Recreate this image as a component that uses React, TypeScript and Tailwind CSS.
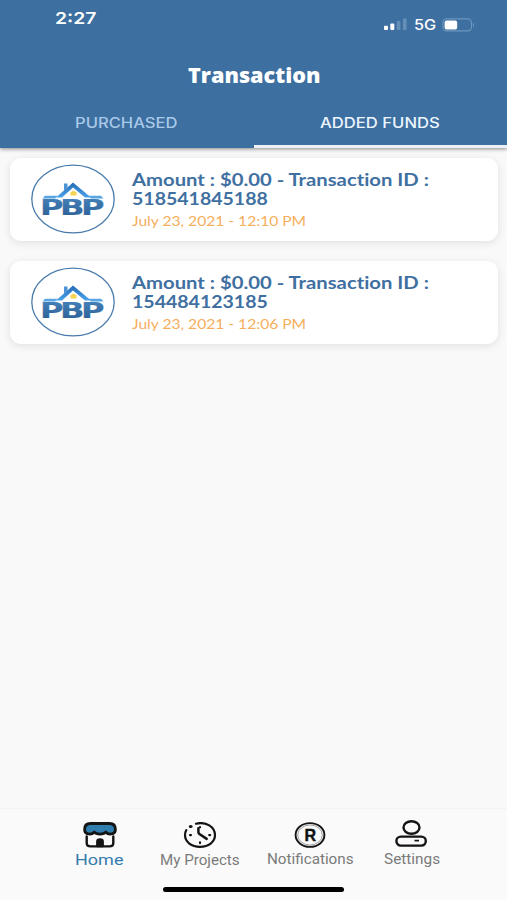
import { useLayoutEffect, useRef, useState, type ReactNode } from "react";
import { clsx } from "clsx";

/** One line of text, stretched horizontally to fill the given width. */
function Stretch({ width, className, children }: { width: number; className?: string; children: ReactNode }) {
  const ref = useRef<HTMLSpanElement>(null);
  const [scale, setScale] = useState(1);
  useLayoutEffect(() => {
    if (ref.current) setScale(width / ref.current.offsetWidth);
  }, [width]);
  return (
    <span className={clsx("block whitespace-nowrap", className)} style={{ width }}>
      <span ref={ref} className="inline-block origin-left" style={{ transform: `scaleX(${scale})` }}>
        {children}
      </span>
    </span>
  );
}

function StatusBar() {
  return (
    <div className="flex h-[52px] items-start justify-between pr-[32px] pl-[55px] [font-family:Inter,sans-serif] text-white">
      <Stretch width={41} className="mt-[9px] text-[16.5px] leading-[19px] font-semibold">2:27</Stretch>
      <div className="mt-[15px] flex h-[19px] items-center">
        <svg className="mr-[7px] h-[13px] w-[23px]" viewBox="0 0 23 13">
          <rect x="0" y="7.8" width="4" height="4.2" rx="1" fill="#fff" />
          <rect x="6.3" y="5.4" width="4" height="6.6" rx="1" fill="#fff" />
          <rect x="12.8" y="3" width="3.6" height="9" rx="1" fill="#6490b8" />
          <rect x="19" y="0.6" width="3.6" height="11.4" rx="1" fill="#6490b8" />
        </svg>
        <Stretch width={22} className="mr-[6px] text-[14px] leading-[19px] font-medium">5G</Stretch>
        <svg className="h-[14px] w-[33px]" viewBox="0 0 33 14">
          <rect x="0.9" y="0.9" width="28.6" height="12" rx="3.8" fill="none" stroke="#6c97be" strokeWidth="1.1" />
          <rect x="2.6" y="2.4" width="12.6" height="9" rx="2" fill="#fff" />
          <path d="M31 4.8c1.6.7 1.6 3.5 0 4.2z" fill="#6c97be" />
        </svg>
      </div>
    </div>
  );
}

function Header() {
  return (
    <header className="relative z-10 flex h-[148px] shrink-0 flex-col bg-[#3d6fa0] shadow-[0_1px_4px_rgba(0,0,0,0.45)]">
      <StatusBar />
      <h1 className="flex h-[46px] justify-center pl-[1px]">
        <Stretch width={133} className="text-[20.5px] leading-[46px] font-extrabold text-white [font-family:'Open_Sans',sans-serif]">
          Transaction
        </Stretch>
      </h1>
      <div className="grid h-[50px] grid-cols-2 grid-rows-[50px] [font-family:Inter,sans-serif] text-[14px] leading-[50px] font-medium">
        <div className="flex justify-center text-[#a9c9e8]">
          <Stretch width={103}>PURCHASED</Stretch>
        </div>
        <div className="flex h-[50px] justify-center border-b-3 border-[#eef1f6] text-[#edf6ff]">
          <Stretch width={120}>ADDED FUNDS</Stretch>
        </div>
      </div>
    </header>
  );
}

function Logo() {
  return (
    <svg className="-mt-[2px] h-[70px] w-[84px] shrink-0" viewBox="0 0 84 70">
      <defs>
        <linearGradient id="roof" x1="0" y1="0" x2="0" y2="1">
          <stop offset="0" stopColor="#2569b3" />
          <stop offset="1" stopColor="#4ba3ed" />
        </linearGradient>
        <linearGradient id="letters" x1="0" y1="0" x2="0" y2="1">
          <stop offset="0" stopColor="#4785bd" />
          <stop offset="1" stopColor="#285a91" />
        </linearGradient>
      </defs>
      <ellipse cx="42" cy="35" rx="41.2" ry="33.8" fill="#fff" stroke="#4a7bad" strokeWidth="1.3" />
      <path d="M33 19.500h3.500v4l-3.500 3z" fill="#4b94d8" />
      <path d="M42 18.500 60 33.500H54L42 23.500 31 33.500H25z" fill="url(#roof)" />
      <path d="M14 31.700H27L24 34.500H11.500zM57 31.700H70L72.500 34.500H60z" fill="#5aa6e4" />
      <path d="M39.500 31.500v-3l3-2 3 2v3z" fill="#f4d34f" />
      <g fontFamily="DejaVu Sans, sans-serif" fontSize="21.500" fontWeight="700" fill="url(#letters)" stroke="#346da6" strokeWidth="0.200">
        <text x="9" y="51.300" textLength="23.500" lengthAdjust="spacingAndGlyphs">P</text>
        <text x="29" y="51.300" textLength="24.500" lengthAdjust="spacingAndGlyphs">B</text>
        <text x="50" y="51.300" textLength="23.500" lengthAdjust="spacingAndGlyphs">P</text>
      </g>
    </svg>
  );
}

function TransactionCard({ id, idWidth, date }: { id: string; idWidth: number; date: string }) {
  return (
    <article className="flex h-[83px] items-center rounded-[11px] bg-white pl-[21px] shadow-[0_2px_8px_rgba(0,0,0,0.1)]">
      <Logo />
      <div className="ml-[17px] pt-[1px] [font-family:Lato,sans-serif] [font-variant-ligatures:none]">
        <div className="text-[16.5px] leading-[19.5px] font-bold text-[#3f70a1]">
          <Stretch width={297}>Amount : $0.00 - Transaction ID :</Stretch>
          <Stretch width={idWidth}>{id}</Stretch>
        </div>
        <Stretch width={174} className="mt-[1px] text-[14px] leading-[19px] text-[#f5ae5c]">{date}</Stretch>
      </div>
    </article>
  );
}

function HomeIcon() {
  return (
    <svg className="ml-[2px] h-[26px] w-[34px]" viewBox="0 0 34 26" fill="none" stroke="#141414" strokeWidth="2.400" strokeLinecap="round" strokeLinejoin="round">
      <path d="M3.700 14.500v6.500q0 3.400 4 3.400h18.600q4 0 4-3.400v-6.500" />
      <path d="M7.500 1.500h19c4.500 0 5.900 3 5.900 6 0 5.300-7.400 5.800-9.600 2.500-2 2.700-9.600 2.700-11.600 0C9 13.300 1.600 12.800 1.600 7.500c0-3 1.400-6 5.900-6z" fill="#307eae" strokeWidth="2.800" />
      <path d="M14.300 24v-4.500q0-2 2.700-2t2.700 2v4.500z" fill="#141414" />
    </svg>
  );
}

function ProjectsIcon() {
  return (
    <svg className="h-[26px] w-[34px]" viewBox="0 0 34 26" fill="none" stroke="#141414" strokeWidth="2.200" strokeLinecap="round" strokeLinejoin="round">
      <path d="M13 1.700C23 -.8 32 5 32 13.100 32 20 25.500 24.800 17 24.800S2 20 2 13.100c0-1.700.5-3.500 1.300-5" />
      <ellipse cx="7.700" cy="4.500" rx="1.900" ry="1.500" fill="#141414" stroke="none" />
      <path d="M15.400 6.300v4q0 1 1 1.700l7.300 4.900" strokeWidth="2.500" />
      <path d="M7 13.100h1M26.200 13.100h1M17 20.300v.8M17 5.100v.2" />
    </svg>
  );
}

function NotificationsIcon() {
  return (
    <svg className="h-[26px] w-[34px]" viewBox="0 0 34 26">
      <ellipse cx="17" cy="13" rx="14.400" ry="11.900" fill="none" stroke="#141414" strokeWidth="1.900" />
      <ellipse cx="17" cy="13" rx="12.300" ry="10" fill="none" stroke="#777" strokeWidth="0.700" />
      <text x="11.400" y="18.700" textLength="11.600" lengthAdjust="spacingAndGlyphs" fontFamily="Liberation Sans, sans-serif" fontSize="16.500" fontWeight="700" fill="#111" stroke="#111" strokeWidth="0.400">R</text>
    </svg>
  );
}

function SettingsIcon() {
  return (
    <svg className="mr-[1px] h-[27px] w-[34px]" viewBox="0 0 34 27" fill="none" stroke="#141414" strokeWidth="2.400">
      <ellipse cx="17.500" cy="7.500" rx="8" ry="6.300" />
      <rect x="2.400" y="16.600" width="29.400" height="9" rx="4.500" />
      <path d="M20.500 20.600h4.500" strokeWidth="1.700" />
    </svg>
  );
}

function NavItem({ icon, label, width, className }: { icon: ReactNode; label: string; width: number; className?: string }) {
  return (
    <div className="flex flex-col items-center">
      <div className="flex h-[28px] items-end">{icon}</div>
      <Stretch width={width} className={clsx("leading-[22px]", className)}>{label}</Stretch>
    </div>
  );
}

function BottomNav() {
  return (
    <footer className="flex h-[92px] shrink-0 flex-col items-center border-t border-[#f3f3f3] bg-[#fafafa] [font-family:Roboto,sans-serif]">
      <nav className="flex h-[78px] w-full items-start pt-[11px] pl-[75px] text-[14px] text-[#7a7a7a]">
        <NavItem icon={<HomeIcon />} label="Home" width={48} className="pt-[1px] text-[15px] text-[#347bae]" />
        <div className="ml-[36.500px]"><NavItem icon={<ProjectsIcon />} label="My Projects" width={80} className="pt-[1px]" /></div>
        <div className="ml-[27px]"><NavItem icon={<NotificationsIcon />} label="Notifications" width={87} /></div>
        <div className="-mt-px ml-[30px]"><NavItem icon={<SettingsIcon />} label="Settings" width={56} className="pt-[1px]" /></div>
      </nav>
      <div className="h-[5px] w-[181px] shrink-0 rounded-full bg-black" />
    </footer>
  );
}

export default function App() {
  return (
    <div className="flex h-[900px] w-[507px] flex-col overflow-hidden bg-[#f9f9f9]">
      <Header />
      <main className="flex grow flex-col gap-[20px] pt-[10px] pr-[9px] pl-[10px]">
        <TransactionCard id="518541845188" idWidth={136} date="July 23, 2021 - 12:10 PM" />
        <TransactionCard id="154484123185" idWidth={136} date="July 23, 2021 - 12:06 PM" />
      </main>
      <BottomNav />
    </div>
  );
}
